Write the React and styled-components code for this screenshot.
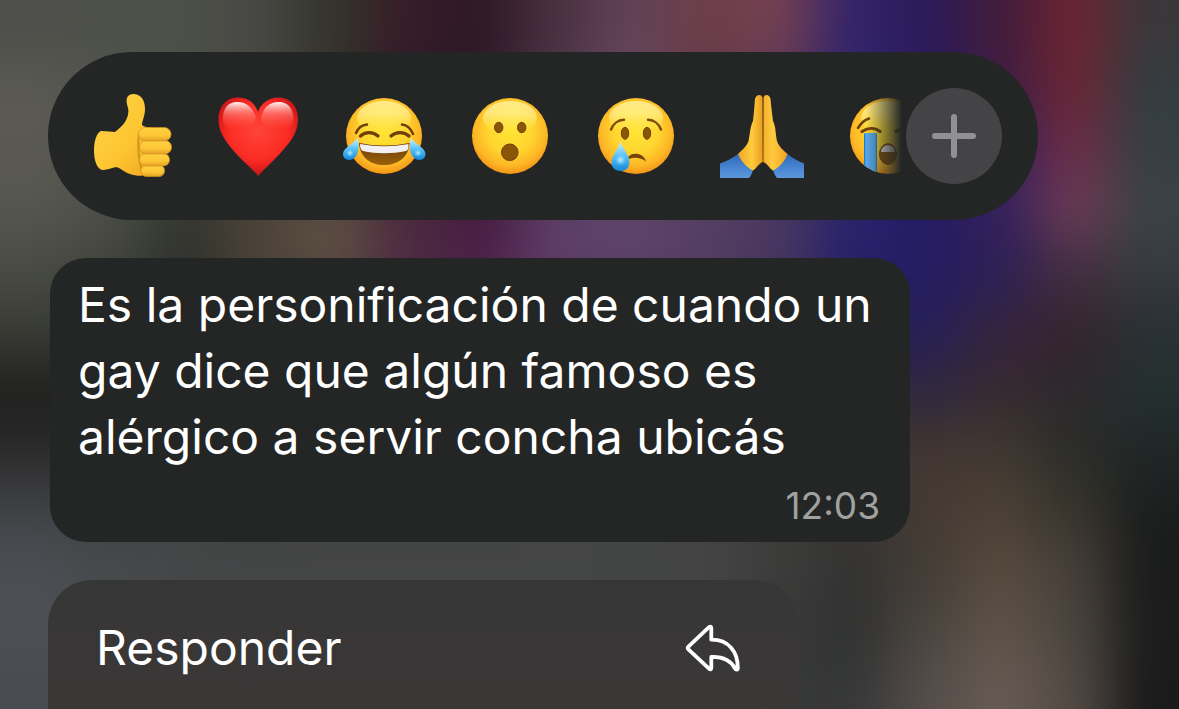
import React from 'react';
import styled, { createGlobalStyle } from 'styled-components';

const GlobalStyle = createGlobalStyle`
  * {
    box-sizing: border-box;
  }
  body {
    margin: 0;
    background-color: #2b2c2b;
    font-family: Inter, 'Liberation Sans', sans-serif;
  }
  button {
    border: 0;
    padding: 0;
    background: none;
    color: inherit;
    font: inherit;
    cursor: pointer;
  }
`;

const Screen = styled.main`
  position: relative;
  z-index: 0;
  display: flex;
  flex-direction: column;
  gap: 38px;
  min-height: 100vh;
  padding: 52px 48px 0;
  overflow: hidden;
  color: #fff;
`;
const BackdropSvg = styled.svg`
  position: absolute;
  inset: 0;
  width: 100%;
  height: 100%;
  z-index: -1;
`;
const GradientDefs = styled.svg`
  position: absolute;
`;
const ReactionBar = styled.div`
  display: flex;
  align-items: center;
  width: 100%;
  max-width: 990px;
  height: 168px;
  padding: 0 36px 0 42px;
  border-radius: 84px;
  background-color: #242625;
`;
const ReactionList = styled.div`
  display: flex;
  flex: 1;
  gap: 42px;
  min-width: 0;
  overflow: hidden;
  mask-image: linear-gradient(
    to right,
    #000 calc(100% - 40px),
    transparent calc(100% - 4px)
  );
`;
const ReactionButton = styled.button`
  flex: none;
  width: 84px;
  height: 84px;

  svg {
    display: block;
    width: 100%;
    height: 100%;
  }
`;
const MoreButton = styled.button`
  display: flex;
  flex: none;
  align-items: center;
  justify-content: center;
  width: 96px;
  height: 96px;
  && {
    border-radius: 50%;
    background-color: #444446;
  }
`;
const Bubble = styled.article`
  width: calc(100% - 4px);
  max-width: 860px;
  margin: 0 2px;
  padding: 14px 30px 14px 28px;
  border-radius: 36px;
  background-color: #242625;
`;
const Message = styled.p`
  margin: 0;
  font-size: 48px;
  line-height: 66px;
`;
const Time = styled.time`
  display: block;
  margin-top: 14px;
  font-size: 37px;
  line-height: 44px;
  text-align: right;
  color: #a0a1a1;
`;
const Menu = styled.div`
  flex: 1;
  width: 100%;
  max-width: 750px;
  border-radius: 44px 44px 0 0;
  background: linear-gradient(#373636, #3a3837);
`;
const MenuItem = styled.button`
  display: flex;
  align-items: center;
  justify-content: space-between;
  width: 100%;
  height: 129px;
  && {
    padding: 6px 57px 0 48px;
    font-size: 48px;
  }
`;

// coarse colour map of the blurred chat wallpaper, one string per row
const wallpaper = [
  '4e4e4a 4d4f49 4d4f49 474843 32332b 381c28 2e1828 4a3040 604258 6c3f48 744050 34246a 2b1a5a 401c3a 6c2433 3a373a',
  '5a5953 52544e 4b4d47 474843 36322b 2e1a28 281828 503448 684a60 643648 5a3658 30246c 2a1c60 3f1d42 6a2635 333d40',
  '5a5951 52544e 484a44 45473f 40382f 3a1c30 3a1a34 583c58 60425e 5c3a54 4e3058 2c226c 281c66 35205a 6c2c48 363f42',
  '55574f 4b4e47 33352f 4c4338 5c4e42 4b2a3c 441c40 5a3d64 5d466a 553e60 4a3a60 29226a 241b64 35205c 6c3b55 3b4245',
  '484b43 40423b 2f312d 4c4338 5c4e42 4f2a44 501f4c 623d68 5d4068 553e64 463460 28206a 251c62 2c1f55 442e42 353b3e',
  '3a3c36 363833 2f302d 303030 303030 303030 303030 303030 303030 303030 303038 282050 261f58 35243f 35242c 293033',
  '201f1e 222120 262626 303030 303030 303030 303030 303030 303030 303030 303030 2f2838 2f2740 36292f 2d292d 243030',
  '2b2a2a 2d2c2d 303030 383838 383838 383838 383838 383838 383838 383838 383838 3c3430 423630 403831 2b2c29 202626',
  '404246 3f4144 404242 404140 424342 424342 424342 434443 434443 424342 3c3c3b 383533 453a34 4c4136 37342c 1b1e1e',
  '4b4f53 474a4b 454748 444646 444645 444645 444645 444645 434545 434443 3c3c3b 323332 433c36 564a3d 47403a 1a1b1b',
  '4c4f55 494c50 444646 444645 444645 444645 444645 444645 434545 434443 383938 303131 4a443f 5e5349 4b453f 1b1c1b',
  '484b51 484b4f 444646 444645 444645 444645 444645 444645 434545 434443 383838 363738 544d49 675b54 534a44 191a1a',
].map((row) => row.split(' ').map((hex) => `#${hex}`));

const CELL_W = 74;
const CELL_H = 60;

function Backdrop() {
  const lastRow = wallpaper.length - 1;
  const lastCol = wallpaper[0].length - 1;
  return (
    <BackdropSvg
      viewBox="0 0 1179 709"
      preserveAspectRatio="none"
      aria-hidden="true"
    >
      <filter id="soften" x="-10%" y="-10%" width="120%" height="120%" colorInterpolationFilters="sRGB">
        <feGaussianBlur stdDeviation="27" />
      </filter>
      <g filter="url(#soften)">
        {wallpaper.map((row, r) =>
          row.map((color, c) => {
            const left = c === 0 ? -100 : c * CELL_W;
            const top = r === 0 ? -100 : r * CELL_H;
            const right = (c + 1) * CELL_W + (c === lastCol ? 100 : 1);
            const bottom = (r + 1) * CELL_H + (r === lastRow ? 100 : 1);
            return (
              <rect
                key={`${r}-${c}`}
                x={left}
                y={top}
                width={right - left}
                height={bottom - top}
                fill={color}
              />
            );
          })
        )}
      </g>
    </BackdropSvg>
  );
}

function SharedGradients() {
  return (
    <GradientDefs width="0" height="0" aria-hidden="true">
      <defs>
        <radialGradient id="face" cx="0.5" cy="0.42" r="0.6">
          <stop offset="0" stopColor="#ffe534" />
          <stop offset="0.5" stopColor="#ffd52f" />
          <stop offset="0.8" stopColor="#fdb525" />
          <stop offset="1" stopColor="#f08e14" />
        </radialGradient>
        <linearGradient id="shine" x1="0" y1="0" x2="0" y2="1">
          <stop offset="0" stopColor="#fff6a8" stopOpacity="0.75" />
          <stop offset="0.4" stopColor="#fff6a0" stopOpacity="0.6" />
          <stop offset="1" stopColor="#ffe94a" stopOpacity="0" />
        </linearGradient>
        <linearGradient id="tear" x1="0" y1="0" x2="0" y2="1">
          <stop offset="0" stopColor="#d3f3ff" />
          <stop offset="0.45" stopColor="#62c7f8" />
          <stop offset="1" stopColor="#1287dd" />
        </linearGradient>
        <radialGradient id="tearGlow">
          <stop offset="0" stopColor="#c9f2ff" />
          <stop offset="1" stopColor="#6fd0fa" stopOpacity="0" />
        </radialGradient>
        <linearGradient id="mouth" x1="0" y1="0" x2="0" y2="1">
          <stop offset="0" stopColor="#6b3a08" />
          <stop offset="1" stopColor="#9a6208" />
        </linearGradient>
        <linearGradient id="skin" x1="0" y1="0" x2="1" y2="1">
          <stop offset="0" stopColor="#ffd54a" />
          <stop offset="0.6" stopColor="#fdc430" />
          <stop offset="1" stopColor="#eea320" />
        </linearGradient>
        <linearGradient id="finger" x1="0" y1="0" x2="0" y2="1">
          <stop offset="0" stopColor="#ffd23f" />
          <stop offset="0.6" stopColor="#fcc637" />
          <stop offset="1" stopColor="#e5a024" />
        </linearGradient>
        <radialGradient id="heart" cx="0.5" cy="0.42" r="0.62">
          <stop offset="0" stopColor="#ff4438" />
          <stop offset="0.6" stopColor="#fb2c24" />
          <stop offset="1" stopColor="#c00e14" />
        </radialGradient>
        <linearGradient id="heartShine" x1="0" y1="0" x2="0" y2="1">
          <stop offset="0" stopColor="#fff" stopOpacity="0.95" />
          <stop offset="0.4" stopColor="#ff9a90" stopOpacity="0.55" />
          <stop offset="1" stopColor="#ff4438" stopOpacity="0" />
        </linearGradient>
        <linearGradient id="sleeve" x1="0" y1="0" x2="0" y2="1">
          <stop offset="0" stopColor="#2f68b8" />
          <stop offset="0.6" stopColor="#4a86d2" />
          <stop offset="1" stopColor="#5b96dc" />
        </linearGradient>
        <linearGradient id="palmLeft" x1="0" y1="0" x2="1" y2="0">
          <stop offset="0" stopColor="#f3a625" />
          <stop offset="0.55" stopColor="#ffcb3d" />
          <stop offset="1" stopColor="#e79d20" />
        </linearGradient>
        <linearGradient id="palmRight" x1="0" y1="0" x2="1" y2="0">
          <stop offset="0" stopColor="#f2b02b" />
          <stop offset="0.4" stopColor="#ffcb3d" />
          <stop offset="1" stopColor="#f0a022" />
        </linearGradient>
        <clipPath id="faceClip">
          <circle cx="42" cy="42" r="38" />
        </clipPath>
      </defs>
    </GradientDefs>
  );
}

function Face({ children }) {
  return (
    <svg viewBox="0 0 84 84" aria-hidden="true">
      <circle cx="42" cy="42" r="38" fill="url(#face)" />
      <ellipse cx="42" cy="24" rx="27" ry="17" fill="url(#shine)" />
      {children}
    </svg>
  );
}

function ThumbsUp() {
  return (
    <svg viewBox="0 0 84 84" aria-hidden="true">
      <path
        d="M11 37C17 37 22 38 25 38C29 35 33 31 35 28C38 23 39 18 38 14C37 10 36 7 37 4C38 0 44 -1 48 1C53 3 55 9 55 15C55 22 52 27 52 31C54 33 58 33 62 34L66 79C58 82 47 83 40 80C34 78 31 74 26 73C21 74 16 76 12 76C1 73 2 40 11 37Z"
        fill="url(#skin)"
      />
      <path d="M49 38C47 52 49 70 53 80" fill="none" stroke="#b97a12" strokeWidth="2" opacity="0.6" />
      <g fill="url(#finger)" stroke="#cf9020" strokeWidth="0.7">
        <rect x="51" y="71" width="23.5" height="11.5" rx="5.5" />
        <rect x="49.5" y="59.5" width="30" height="12.5" rx="6" />
        <rect x="49.5" y="46.5" width="32" height="13.5" rx="6.5" />
        <rect x="48.5" y="33.5" width="32.5" height="13.5" rx="6.7" />
      </g>
    </svg>
  );
}

function Heart() {
  return (
    <svg viewBox="0 0 84 84" aria-hidden="true">
      <path
        d="M42 82C39 77 27 68 16 55C7 44 2.5 36 2.5 25C2.5 12 11 3.5 22 3.5C32 3.5 39 9 42 18C45 9 53 3.5 63 3.5C74 3.5 82 12 82 25C82 36 77 45 68 55C57 68 46 77 42 82Z"
        fill="url(#heart)"
      />
      <path d="M7 27C6 15 12 8 21 8C31 8 37 14 40 24C38 38 9 42 7 27Z" fill="url(#heartShine)" />
      <path d="M77.5 27C78 15 72 8 63 8C53 8 47 14 45 24C47 38 75 42 77.5 27Z" fill="url(#heartShine)" />
    </svg>
  );
}

function Laughing() {
  return (
    <Face>
      <g fill="none" stroke="#6e3f08" strokeLinecap="round" strokeWidth="2.5">
        <path d="M14 39C16 34 20 31 25 30.5" />
        <path d="M60 30.5C65 31 69 35 71 40" />
        <path d="M18.5 42C23 37.5 31 37.5 36 42" strokeWidth="3.2" />
        <path d="M49 42C54 37.5 62 37.5 67 42" strokeWidth="3.2" />
      </g>
      <path d="M17 49Q42 54 67.5 49C67 63 56 71 42 71C28 71 18 63 17 49Z" fill="url(#mouth)" />
      <path d="M18 50Q42 54.500 66.5 50C67 54 66 56.5 64 57C50 60 34 60 21 57C19 56.5 18 54 18 50Z" fill="#f1eff3" />
      <path d="M16 44C17 51 17 58 14 62C10 68 1 67 1 60C1 54 10 51 16 44Z" fill="url(#tear)" />
      <path d="M68.5 44C67.5 51 67.5 58 70.5 62C74.5 68 83.5 67 83.5 60C83.5 54 74.5 51 68.5 44Z" fill="url(#tear)" />
      <circle cx="8" cy="59" r="4" fill="url(#tearGlow)" />
      <circle cx="76" cy="59" r="4" fill="url(#tearGlow)" />
    </Face>
  );
}

function Surprised() {
  return (
    <Face>
      <g fill="#8a5508" stroke="#70420a" strokeWidth="1">
        <ellipse cx="30.7" cy="33.5" rx="4.2" ry="5.2" />
        <ellipse cx="53.7" cy="33.5" rx="4.2" ry="5.2" />
        <circle cx="41.8" cy="58.3" r="8.3" />
      </g>
    </Face>
  );
}

function Crying() {
  return (
    <Face>
      <g fill="#8a5508" stroke="#70420a" strokeWidth="1">
        <ellipse cx="31" cy="39.3" rx="3.7" ry="6" />
        <ellipse cx="53" cy="39.3" rx="3.7" ry="6" />
      </g>
      <g fill="none" stroke="#7c4a0a" strokeLinecap="round" strokeWidth="2.4">
        <path d="M17 35.5C19 30 24 26 30 25.8" />
        <path d="M54 25.8C60 26 65 30 67 35.5" />
      </g>
      <path d="M34 63C38 58 49 58 52.3 67.5C46 63 40 63 35 65Z" fill="#75440a" />
      <path d="M26.7 47C28 54 35.5 61 35.5 68C35.5 74 31.5 77 26.7 77C21.5 77 17.5 74 17.5 68C17.5 61 25.5 54 26.7 47Z" fill="url(#tear)" />
      <circle cx="26.5" cy="66" r="6" fill="url(#tearGlow)" />
    </Face>
  );
}

function FoldedHands() {
  return (
    <svg viewBox="0 0 84 84" aria-hidden="true">
      <path d="M0 69.500C7 67 13 64 18 60L33 76C32 79 31 82 29 84H0Z" fill="url(#sleeve)" />
      <path d="M84 69.500C78 67 72 64 67.5 60L53 76C54 79 55 82 57 84H84Z" fill="url(#sleeve)" />
      <path d="M18 60C22 56 27 52 28.5 47C30 40 30 33 33 27C34 19 34.5 11 35 5C36 0 42 0 42.5 4L43 68C39 69 36 75 33 76.5C27 74 21 67 18 60Z" fill="url(#palmLeft)" />
      <path d="M67.5 60C63 56 58.5 52 57 47C55.5 40 56 33 53 27C52 19 51 11 50.5 5C49.5 0 44 0 43.5 4L43 68C47 69 50 75 53 76.5C59 74 65 67 67.5 60Z" fill="url(#palmRight)" />
      <path d="M43 3V68" stroke="#9c600f" strokeWidth="1.3" />
    </svg>
  );
}

function Sobbing() {
  return (
    <Face>
      <g clipPath="url(#faceClip)">
        <path d="M18 39H31V84H18Z" fill="#58a9ea" />
        <path d="M18.6 40V80M30.4 40V80" stroke="#237cc4" strokeWidth="1.2" />
        <path d="M53 39H66V84H53Z" fill="#58a9ea" />
      </g>
      <g fill="none" stroke="#70420a" strokeLinecap="round" strokeWidth="2.5">
        <path d="M12 34C15 29 18 26 23 24.5" />
        <path d="M61 24.5C66 26 69 29 72 34" />
        <path d="M16 37.5C22 33.5 29 33.5 34 37.5" strokeWidth="3.2" />
        <path d="M50 37.5C55 33.5 62 33.5 68 37.5" strokeWidth="3.2" />
      </g>
      <ellipse cx="42" cy="60" rx="8.5" ry="10.3" fill="#865407" stroke="#68400b" strokeWidth="1" />
      <path d="M35 58C35 49 49 49 49 58Z" fill="#efedf0" />
    </Face>
  );
}

function PlusIcon() {
  return (
    <svg width="44" height="44" viewBox="0 0 44 44" aria-hidden="true">
      <path d="M22 3V41M3 22H41" stroke="#919193" strokeWidth="6" strokeLinecap="round" />
    </svg>
  );
}

function ReplyIcon() {
  return (
    <svg width="56" height="48" viewBox="0 0 56 48" aria-hidden="true">
      <path
        d="M3.4 22.6L24 3.2Q26.3 1.5 26.3 4.5V15.7C43 15.5 53 27 52.8 44.3C52.8 46 50.8 46 50 44.5C45.5 36 38 32.5 26.3 33V43.5Q26.3 46.5 24 44.7L3.4 25.4Q2 24 3.4 22.6Z"
        fill="none"
        stroke="#fff"
        strokeWidth="3.8"
        strokeLinejoin="round"
      />
    </svg>
  );
}

const reactions = [
  { label: 'Me gusta', Icon: ThumbsUp },
  { label: 'Corazón', Icon: Heart },
  { label: 'Risa', Icon: Laughing },
  { label: 'Sorpresa', Icon: Surprised },
  { label: 'Tristeza', Icon: Crying },
  { label: 'Gracias', Icon: FoldedHands },
  { label: 'Llanto', Icon: Sobbing },
];

export default function App() {
  return (
    <Screen>
      <GlobalStyle />
      <SharedGradients />
      <Backdrop />
      <ReactionBar>
        <ReactionList>
          {reactions.map(({ label, Icon }) => (
            <ReactionButton key={label} type="button" aria-label={label}>
              <Icon />
            </ReactionButton>
          ))}
        </ReactionList>
        <MoreButton type="button" aria-label="Más reacciones">
          <PlusIcon />
        </MoreButton>
      </ReactionBar>
      <Bubble>
        <Message>
          Es la personificación de cuando un gay dice que algún famoso es
          alérgico a servir concha ubicás
        </Message>
        <Time dateTime="12:03">12:03</Time>
      </Bubble>
      <Menu>
        <MenuItem type="button">
          <span>Responder</span>
          <ReplyIcon />
        </MenuItem>
      </Menu>
    </Screen>
  );
}
